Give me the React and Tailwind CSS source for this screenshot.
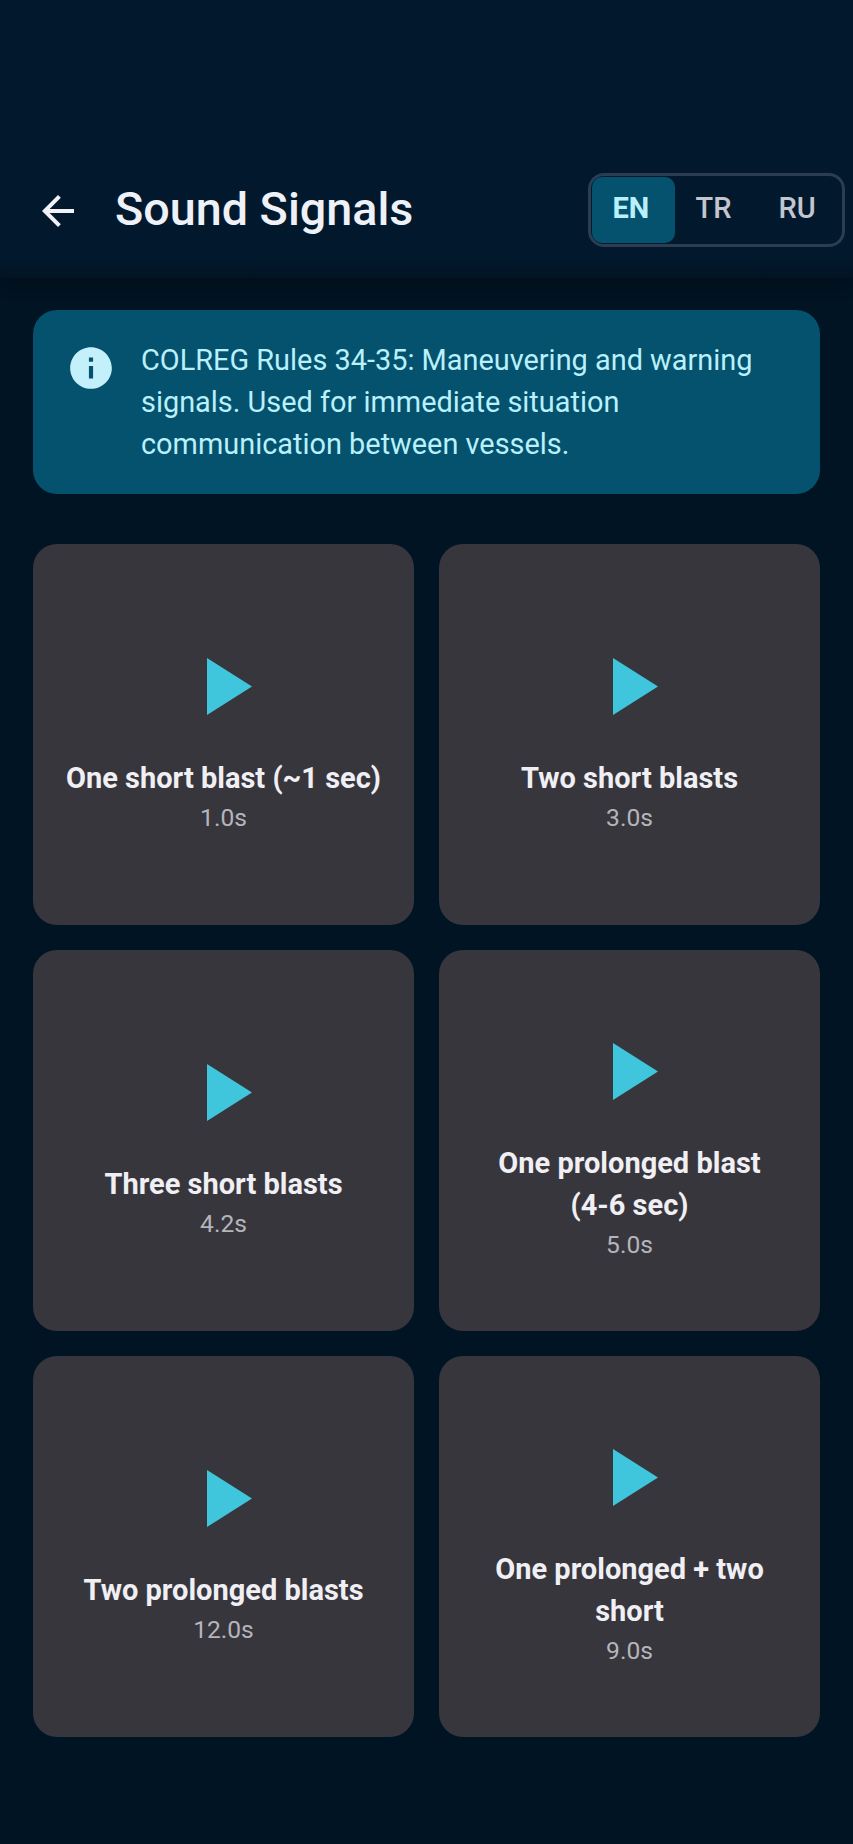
import React from "react";

const signals = [
  { name: "One short blast (~1 sec)", duration: "1.0s" },
  { name: "Two short blasts", duration: "3.0s" },
  { name: "Three short blasts", duration: "4.2s" },
  { name: "One prolonged blast\n(4-6 sec)", duration: "5.0s" },
  { name: "Two prolonged blasts", duration: "12.0s" },
  { name: "One prolonged + two short", duration: "9.0s" },
];

const SignalCard = ({ name, duration }) => (
  <div className="h-[381px] rounded-[24px] bg-[#38363d] flex flex-col items-center justify-center px-[32px]">
    <svg width="96" height="96" viewBox="0 0 96 96" className="mb-[27px] block shrink-0">
      <path d="M31 24L76 52.5L31 81z" fill="#40c6dc" />
    </svg>
    <div className="text-[29px] leading-[42px] font-bold text-[#f0eff4] text-center whitespace-pre-line">{name}</div>
    <div className="text-[24.6px] leading-[36px] pt-[1px] text-[#b5b4bb] text-center">{duration}</div>
  </div>
);

export default function App() {
  return (
    <div className="w-[853px] h-[1844px] bg-[#011424] overflow-hidden font-['Roboto',sans-serif]">
      <header className="relative h-[278px] bg-gradient-to-b from-[#02192d] from-[92%] to-[#011423] pt-[173px] pl-[34px] pr-[8px] flex items-start shadow-[0_6px_14px_rgba(0,0,0,0.3)]">
        <svg width="48" height="48" viewBox="0 0 24 24" className="mt-[14px] shrink-0" fill="#f0f2f8">
          <path d="M20 11H7.83l5.59-5.59L12 4l-8 8 8 8 1.41-1.41L7.83 13H20z" />
        </svg>
        <h1 className="ml-[33px] text-[46.7px] leading-[68px] mt-[2px] font-medium text-[#eef1f8] flex-1">Sound Signals</h1>
        <div className="w-[257px] h-[74px] rounded-[16px] border-[3px] border-[#2b3d52] flex overflow-hidden">
          <div className="w-[83px] bg-[#04526d] rounded-[10px] my-[1px] ml-[1px] pb-[3px] pr-[5px] flex items-center justify-center text-[29px] font-bold text-[#b9f0fb]">EN</div>
          <div className="w-[78px] pb-[3px] flex items-center justify-center text-[29px] font-medium text-[#c4c6cf]">TR</div>
          <div className="w-[90px] pb-[3px] flex items-center justify-center text-[29px] font-medium text-[#c4c6cf]">RU</div>
        </div>
      </header>

      <main className="px-[33px] pt-[32px]">
        <div className="h-[184px] rounded-[24px] bg-[#04526d] flex items-start pt-[29px] pl-[33px] pr-[30px]">
          <svg width="50" height="50" viewBox="0 0 24 24" fill="#c4f0fb" className="shrink-0 mt-[4px]">
            <path d="M12 2C6.48 2 2 6.48 2 12s4.48 10 10 10 10-4.48 10-10S17.52 2 12 2zm1 15h-2v-6h2v6zm0-8h-2V7h2v2z" />
          </svg>
          <p className="ml-[25px] text-[28.9px] leading-[42px] text-[#b9f0fb]">
            COLREG Rules 34-35: Maneuvering and warning signals. Used for immediate situation communication between vessels.
          </p>
        </div>

        <div className="mt-[50px] grid grid-cols-2 gap-[25px]">
          {signals.map((s) => (
            <SignalCard key={s.name} name={s.name} duration={s.duration} />
          ))}
        </div>
      </main>
    </div>
  );
}
